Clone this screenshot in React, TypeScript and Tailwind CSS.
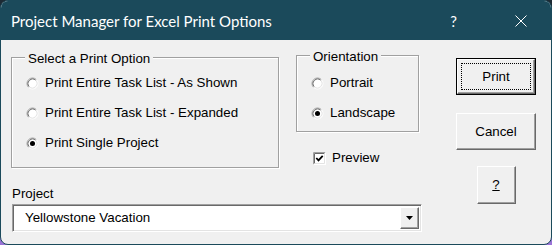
import React from 'react';

const Radio: React.FC<{ checked?: boolean }> = ({ checked }) => (
  <svg width="13" height="13" viewBox="0 0 13 13" className="shrink-0">
    <circle cx="6.5" cy="6.5" r="5" fill="#fff" />
    <path d="M2.61 10.39 A5.5 5.5 0 0 1 10.39 2.61" fill="none" stroke="#a0a0a0" strokeWidth="1" />
    <path d="M10.39 2.61 A5.5 5.5 0 0 1 2.61 10.39" fill="none" stroke="#ffffff" strokeWidth="1" />
    <path d="M3.32 9.68 A4.5 4.5 0 0 1 9.68 3.32" fill="none" stroke="#696969" strokeWidth="1" />
    <path d="M9.68 3.32 A4.5 4.5 0 0 1 3.32 9.68" fill="none" stroke="#e3e3e3" strokeWidth="1" />
    {checked && <circle cx="6.5" cy="6.5" r="2.5" fill="#000" />}
  </svg>
);

const Check: React.FC = () => (
  <svg width="13" height="13" viewBox="0 0 13 13" className="shrink-0">
    <rect x="0" y="0" width="13" height="13" fill="#fff" />
    <path d="M0.5 12.5 V0.5 H12.5" fill="none" stroke="#a0a0a0" />
    <path d="M1.5 11.5 V1.5 H11.5" fill="none" stroke="#696969" />
    <path d="M0.5 12.5 H12.5 V0.5" fill="none" stroke="#ffffff" />
    <path d="M1.5 11.5 H11.5 V1.5" fill="none" stroke="#e3e3e3" />
    <path d="M3.3 6 L5.5 8.4 L9.7 3.8" fill="none" stroke="#000" strokeWidth="1.8" />
  </svg>
);

const Frame: React.FC<{ title: string; className: string; children: React.ReactNode }> = ({ title, className, children }) => (
  <div className={`relative border border-[#a0a0a0] shadow-[inset_1px_1px_0_#fff,1px_1px_0_#fff] ${className}`}>
    <span className="absolute left-[13px] px-[3px] bg-[#f0f0f0] leading-[16px] top-[-7px]">{title}</span>
    {children}
  </div>
);

const Option: React.FC<{ label: string; checked?: boolean }> = ({ label, checked }) => (
  <div className="h-[30px] flex items-center gap-[6px]">
    <Radio checked={checked} />
    <span>{label}</span>
  </div>
);

const raised =
  'bg-[#f0f0f0] border border-t-white border-l-white border-r-[#696969] border-b-[#696969] shadow-[inset_-1px_-1px_0_#a0a0a0]';

export default function App() {
  return (
    <div className="w-[552px] h-[245px] bg-gradient-to-b from-[#1c2a33] to-[#9b74d8]">
      <div className="w-full h-full flex flex-col rounded-[8px] overflow-hidden border border-[#1b4a5b] bg-[#f0f0f0] font-['Liberation_Sans',Arial,sans-serif] text-[13.33px] leading-[16px] text-black">
        <div className="h-[39px] shrink-0 bg-[#1b4a5b] flex items-center pl-[10px] text-white">
          <span className="font-['Lato',sans-serif] text-[15px]">Project Manager for Excel Print Options</span>
          <span className="ml-auto font-['Lato',sans-serif] text-[15px]">?</span>
          <svg width="12" height="12" viewBox="0 0 12 12" className="ml-[58px] mr-[24px]">
            <path d="M0.5 0.5 L11.5 11.5 M11.5 0.5 L0.5 11.5" stroke="#fff" strokeWidth="1" />
          </svg>
        </div>

        <div className="flex-1 flex">
          <div className="w-[421px] pl-[10px] flex flex-col">
            <div className="flex items-start">
              <Frame title="Select a Print Option" className="mt-[17px] w-[268px] h-[111px] pt-[10px] pl-[14px]">
                <Option label="Print Entire Task List - As Shown" />
                <Option label="Print Entire Task List - Expanded" />
                <Option label="Print Single Project" checked />
              </Frame>
              <div className="ml-[17px] mt-[15px] flex flex-col">
                <Frame title="Orientation" className="w-[123px] h-[77px] pt-[12px] pl-[14px]">
                  <Option label="Portrait" />
                  <Option label="Landscape" checked />
                </Frame>
                <div className="mt-[18px] pl-[17px] h-[16px] flex items-center gap-[6px]">
                  <Check />
                  <span>Preview</span>
                </div>
              </div>
            </div>

            <div className="mt-[18px] ml-[1px]">Project</div>
            <div className="mt-[2px] ml-[1px] w-[410px] h-[28px] flex items-center bg-white border border-t-[#a0a0a0] border-l-[#a0a0a0] border-r-white border-b-white shadow-[inset_1px_1px_0_#696969,inset_-1px_-1px_0_#e3e3e3]">
              <span className="pl-[12px] flex-1">Yellowstone Vacation</span>
              <div className={`${raised} w-[19px] h-[22px] mr-[2px] flex items-center justify-center`}>
                <svg width="7" height="4" viewBox="0 0 7 4">
                  <path d="M0 0 H7 L3.5 4 Z" fill="#000" />
                </svg>
              </div>
            </div>
          </div>

          <div className="ml-[34px] w-[80px] pt-[18px] flex flex-col items-center">
            <div className="w-[80px] h-[37px] border border-black">
              <div className={`${raised} w-full h-full p-[3px]`}>
                <div className="w-full h-full border border-dotted border-black flex items-center justify-center">Print</div>
              </div>
            </div>
            <div className={`${raised} mt-[18px] w-[80px] h-[37px] flex items-center justify-center`}>Cancel</div>
            <div className={`${raised} mt-[16px] w-[39px] h-[38px] flex items-center justify-center`}>
              <span className="underline">?</span>
            </div>
          </div>
        </div>
      </div>
    </div>
  );
}
